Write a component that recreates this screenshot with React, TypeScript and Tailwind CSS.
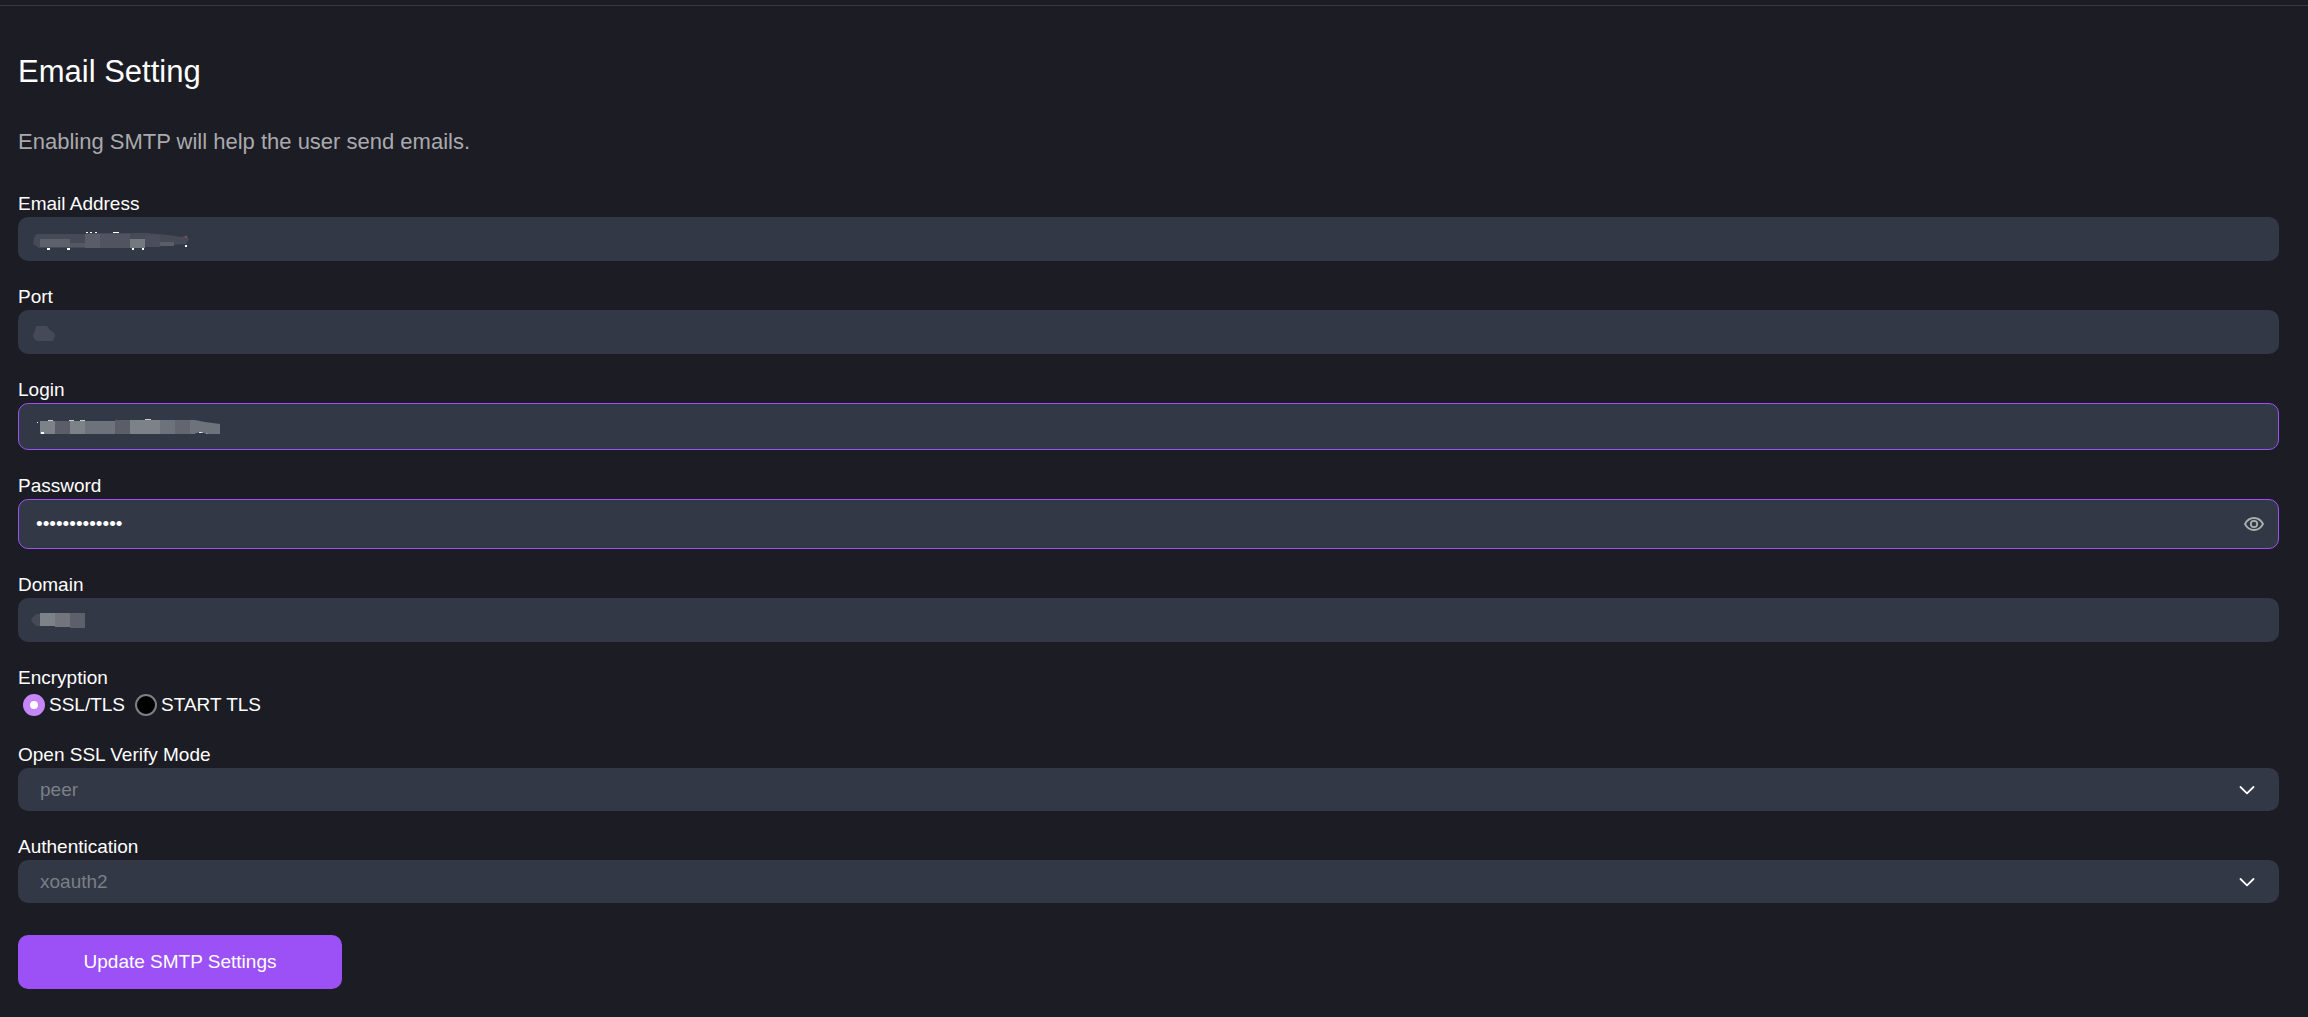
import React, { useState } from 'react';

const inputClass = 'block w-full rounded-[10px] bg-[#323846] px-[17px] text-[19px] text-white outline-none';

type FieldProps = {
  id: string;
  label: string;
  children: React.ReactNode;
};

const Field: React.FC<FieldProps> = ({ id, label, children }) => (
  <div>
    <label htmlFor={id} className="block pt-[2px] text-[19px] leading-[26px]">{label}</label>
    <div className="relative">{children}</div>
  </div>
);

const ChevronDown: React.FC = () => (
  <svg
    className="pointer-events-none absolute right-6 top-1/2 -translate-y-1/2"
    width="16" height="10" viewBox="0 0 16 10" fill="none" stroke="#fff" strokeWidth="1.8" strokeLinecap="round" strokeLinejoin="round"
  >
    <path d="M1.500 2 8 8.300l6.500-6.300" />
  </svg>
);

type SelectFieldProps = {
  id: string;
  label: string;
  options: string[];
};

const SelectField: React.FC<SelectFieldProps> = ({ id, label, options }) => (
  <Field id={id} label={label}>
    <select
      id={id}
      className="block h-[43px] w-full appearance-none rounded-[10px] bg-[#323846] px-[22px] pt-[2px] text-[19px] text-[#7b7f87] outline-none"
    >
      {options.map(option => (
        <option key={option}>{option}</option>
      ))}
    </select>
    <ChevronDown />
  </Field>
);

// x, y, width, height, colour
type Block = [number, number, number, number, string];

const Mosaic: React.FC<{ blocks: Block[]; edge?: string }> = ({ blocks, edge }) => (
  <svg
    aria-hidden="true"
    className="pointer-events-none absolute left-3 top-1/2 -translate-y-1/2"
    width="200" height="30" viewBox="0 0 200 30"
  >
    {edge && <path d={edge} fill="#464956" />}
    {blocks.map(([x, y, w, h, fill]) => (
      <rect key={`${x}-${y}`} x={x} y={y} width={w} height={h} fill={fill} />
    ))}
  </svg>
);

const emailBlocks: Block[] = [
  [10, 15, 30, 8, '#5d616c'],
  [40, 19, 15, 4, '#545864'],
  [55, 10, 15, 14, '#5a5d68'],
  [70, 10, 30, 14, '#515460'],
  [100, 15, 15, 9, '#747980'],
  [115, 11, 15, 12, '#4b4e5a'],
  [130, 18, 14, 4, '#5a5d68'],
  [17, 24, 3, 2, '#fff'],
  [37, 24, 3, 2, '#fff'],
  [56, 8, 2, 1, '#fff'],
  [60, 8, 2, 1, '#fff'],
  [65, 8, 2, 1, '#fff'],
  [83, 8, 6, 1, '#fff'],
  [102, 24, 2, 2, '#fff'],
  [112, 24, 2, 2, '#fff'],
  [155, 21, 2, 2, '#fff'],
  [155, 12, 2, 2, '#8c4656'],
];

const loginBlocks: Block[] = [
  [10, 9, 15, 13, '#7d8188'],
  [25, 9, 15, 13, '#5b5e69'],
  [40, 9, 15, 13, '#7d8188'],
  [55, 9, 30, 13, '#6e727a'],
  [85, 8, 15, 14, '#5b5e69'],
  [100, 8, 30, 14, '#7d8188'],
  [130, 8, 15, 14, '#6e727a'],
  [145, 8, 15, 14, '#636670'],
  [7, 10, 1, 1, '#fff'],
  [11, 20, 3, 2, '#fff'],
  [18, 8, 5, 1, '#c9cbce'],
  [39, 8, 5, 1, '#c9cbce'],
  [50, 8, 5, 1, '#c9cbce'],
  [115, 7, 6, 1, '#c9cbce'],
  [169, 20, 4, 1, '#fff'],
  [176, 20, 2, 2, '#fff'],
];

const domainBlocks: Block[] = [
  [10, 8, 15, 13, '#7d8188'],
  [25, 8, 15, 14, '#72757d'],
  [40, 8, 15, 15, '#5d606b'],
];

const App: React.FC = () => {
  const [encryption, setEncryption] = useState('SSL/TLS');
  const [showPassword, setShowPassword] = useState(false);

  return (
    <div className="min-h-screen bg-[#1c1c24] pt-[5px] font-['Liberation_Sans',Arial,sans-serif] text-white">
      <div className="border-t border-[#343846] pb-7 pl-[18px] pr-[29px] pt-[46px]">
        <h1 className="text-[31px] leading-10">Email Setting</h1>
        <p className="mt-8 text-[22px] leading-9 text-[#a9aaad]">Enabling SMTP will help the user send emails.</p>

        <form className="mt-[29px] flex flex-col gap-[21px]" onSubmit={e => e.preventDefault()}>
          <Field id="email" label="Email Address">
            <input id="email" type="email" className={`${inputClass} h-11`} />
            <Mosaic
              blocks={emailBlocks}
              edge="M6 10h50v-1h62l20 2 14 2 4-2 3 4-3 5-14 1-20 2-70 1H9l-6-4 1-6z"
            />
          </Field>

          <Field id="port" label="Port">
            <input id="port" type="text" className={`${inputClass} h-11`} />
            <Mosaic blocks={[]} edge="M6 9h11l3 4q5 2 5 6l-2 5H7q-4-2-4-6l2-4z" />
          </Field>

          <Field id="login" label="Login">
            <input id="login" type="text" className={`${inputClass} h-[47px] border border-[#9b51f5]`} />
            <Mosaic blocks={loginBlocks} />
            <svg aria-hidden="true" className="pointer-events-none absolute left-3 top-1/2 -translate-y-1/2" width="200" height="30" viewBox="0 0 200 30">
              <path d="M160 8h5l10 2 15 2v10h-12l-8-2-6 2h-4z" fill="#6e727a" />
            </svg>
          </Field>

          <Field id="password" label="Password">
            <input
              id="password"
              type={showPassword ? 'text' : 'password'}
              defaultValue="smtppassword1"
              className={`${inputClass} h-[50px] border border-[#9b51f5]`}
            />
            <button
              type="button"
              aria-label="Show password"
              onClick={() => setShowPassword(!showPassword)}
              className="absolute right-[14px] top-1/2 -translate-y-1/2"
            >
              <svg width="22" height="16" viewBox="0 0 22 16" fill="none" stroke="#abb0ae" strokeWidth="1.8">
                <path d="M2 8C4 4.200 7.300 2 11 2s7 2.200 9 6c-2 3.800-5.300 6-9 6s-7-2.200-9-6Z" />
                <circle cx="11" cy="8" r="3.200" />
              </svg>
            </button>
          </Field>

          <Field id="domain" label="Domain">
            <input id="domain" type="text" className={`${inputClass} h-11`} />
            <Mosaic blocks={domainBlocks} edge="M10 9v12H6l-5-5 1-3 4-4z" />
          </Field>

          <fieldset>
            <legend className="pt-[2px] text-[19px] leading-[26px]">Encryption</legend>
            <div className="flex h-7 items-center gap-[10px] pl-[5px] text-[19px]">
              {['SSL/TLS', 'START TLS'].map(mode => (
                <label key={mode} className="flex items-center gap-1">
                  <input
                    type="radio"
                    name="encryption"
                    checked={encryption === mode}
                    onChange={() => setEncryption(mode)}
                    className="size-[22px] appearance-none rounded-full border-2 border-[#7b7f87] bg-black checked:border-[7px] checked:border-[#c586f8] checked:bg-white"
                  />
                  {mode}
                </label>
              ))}
            </div>
          </fieldset>

          <SelectField id="verify-mode" label="Open SSL Verify Mode" options={['peer', 'none']} />
          <SelectField id="authentication" label="Authentication" options={['xoauth2', 'plain', 'login']} />

          <button type="submit" className="mt-[11px] h-[54px] w-[324px] rounded-[10px] bg-[#9b51f5] text-[19px]">
            Update SMTP Settings
          </button>
        </form>
      </div>
    </div>
  );
};

export default App;
